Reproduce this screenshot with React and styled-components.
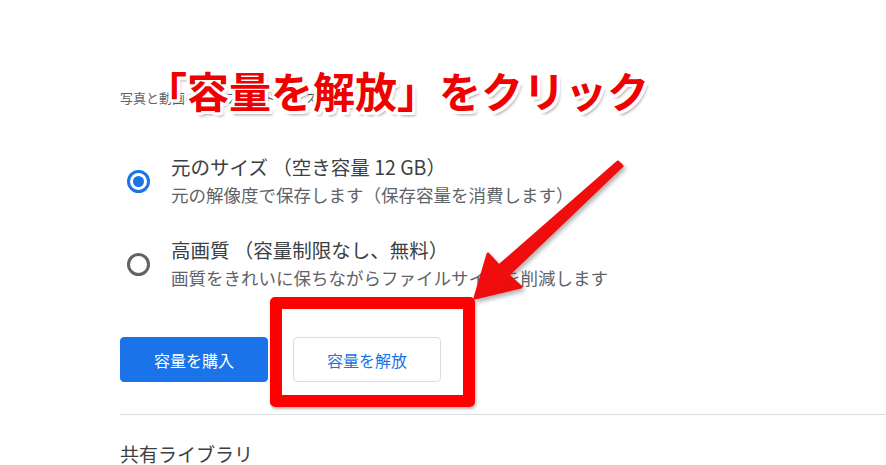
import React from 'react';
import styled, { createGlobalStyle } from 'styled-components';

const GlobalStyle = createGlobalStyle`
    html, body {
        margin: 0;
        padding: 0;
        background: #ffffff;
    }
    body {
        font-family: "Noto Sans CJK JP", "Noto Sans", Roboto, sans-serif;
        color: #3c4043;
    }
`;

const Page = styled.div`
    position: relative;
    width: 886px;
    height: 465px;
    overflow: hidden;
    background: #ffffff;
`;

const Content = styled.div`
    display: flex;
    flex-direction: column;
    padding: 90px 0 0 120px;
`;

const SectionTitle = styled.div`
    font-size: 13px;
    line-height: 16px;
    color: #5f6368;
`;

const OptionList = styled.div`
    display: flex;
    flex-direction: column;
    gap: 29px;
    margin-top: 48px;
`;

const Option = styled.label`
    display: flex;
    align-items: center;
    gap: 21px;
    padding-left: 7px;
`;

const Radio = styled.span`
    box-sizing: border-box;
    width: 23px;
    height: 23px;
    border-radius: 50%;
    border: 3px solid ${p => (p.checked ? '#1a73e8' : '#5f6368')};
    display: flex;
    align-items: center;
    justify-content: center;
    flex-shrink: 0;

    &::after {
        content: '';
        width: 11px;
        height: 11px;
        border-radius: 50%;
        background: ${p => (p.checked ? '#1a73e8' : 'transparent')};
    }
`;

const OptionText = styled.div`
    display: flex;
    flex-direction: column;
    gap: 2px;
`;

const OptionTitle = styled.div`
    font-size: 19.5px;
    line-height: 26px;
    color: #3c4043;
    white-space: pre;
`;

const OptionSub = styled.div`
    font-size: 17.5px;
    line-height: 26px;
    color: #5f6368;
`;

const ButtonRow = styled.div`
    display: flex;
    gap: 25px;
    margin-top: 46px;
`;

const Button = styled.button`
    box-sizing: border-box;
    width: 148px;
    height: 45px;
    border-radius: 4px;
    font-family: inherit;
    font-size: 16px;
    cursor: pointer;
    border: 1px solid ${p => (p.primary ? '#1a73e8' : '#dadce0')};
    background: ${p => (p.primary ? '#1a73e8' : '#ffffff')};
    color: ${p => (p.primary ? '#ffffff' : '#1a73e8')};
`;

const Divider = styled.hr`
    margin: 32px 0 0;
    border: 0;
    border-top: 1px solid #dadce0;
`;

const LibraryTitle = styled.div`
    margin-top: 28px;
    font-size: 19px;
    line-height: 22px;
    color: #3c4043;
`;

/* annotation overlays */
const Caption = styled.div`
    position: absolute;
    left: 145px;
    top: 64px;
    font-size: 42px;
    line-height: 52px;
    font-weight: 700;
    color: #f00000;
    white-space: nowrap;
    text-shadow:
        3px 0 0 #fff, -3px 0 0 #fff, 0 3px 0 #fff, 0 -3px 0 #fff,
        2px 2px 0 #fff, -2px 2px 0 #fff, 2px -2px 0 #fff, -2px -2px 0 #fff,
        3px 2px 0 #fff, -3px 2px 0 #fff, 3px -2px 0 #fff, -3px -2px 0 #fff,
        2px 3px 0 #fff, -2px 3px 0 #fff, 2px -3px 0 #fff, -2px -3px 0 #fff,
        3px 4px 3px rgba(0, 0, 0, 0.35);
`;

const Highlight = styled.div`
    position: absolute;
    left: 270px;
    top: 297px;
    width: 205px;
    height: 110px;
    box-sizing: border-box;
    border: 12px solid #ff0000;
    border-radius: 5px;
    box-shadow: 1px 2px 3px rgba(0, 0, 0, 0.3);
`;

const ArrowLayer = styled.svg`
    position: absolute;
    left: 0;
    top: 0;
    pointer-events: none;
`;

function Arrow() {
    return (
        <ArrowLayer width="886" height="465" viewBox="0 0 886 465">
            <defs>
                <linearGradient id="arrowFill" x1="0" y1="0" x2="1" y2="1">
                    <stop offset="0" stopColor="#ff1a1a" />
                    <stop offset="1" stopColor="#e00000" />
                </linearGradient>
                <filter id="arrowShadow" x="-20%" y="-20%" width="140%" height="140%">
                    <feDropShadow dx="2" dy="3" stdDeviation="2" floodColor="#000" floodOpacity="0.3" />
                </filter>
            </defs>
            <polygon
                points="618,162 622,166 508,275 521,287 475,298 488,254 499,266"
                fill="url(#arrowFill)"
                stroke="url(#arrowFill)"
                strokeWidth="3"
                strokeLinejoin="round"
                filter="url(#arrowShadow)"
            />
        </ArrowLayer>
    );
}

export default function App() {
    return (
        <Page>
            <GlobalStyle />
            <Content>
                <SectionTitle>写真と動画のアップロード サイズ</SectionTitle>
                <OptionList>
                    <Option>
                        <Radio checked />
                        <OptionText>
                            <OptionTitle>元のサイズ （空き容量 12 GB）</OptionTitle>
                            <OptionSub>元の解像度で保存します（保存容量を消費します）</OptionSub>
                        </OptionText>
                    </Option>
                    <Option>
                        <Radio />
                        <OptionText>
                            <OptionTitle>高画質 （容量制限なし、無料）</OptionTitle>
                            <OptionSub>画質をきれいに保ちながらファイルサイズを削減します</OptionSub>
                        </OptionText>
                    </Option>
                </OptionList>
                <ButtonRow>
                    <Button primary>容量を購入</Button>
                    <Button>容量を解放</Button>
                </ButtonRow>
                <Divider />
                <LibraryTitle>共有ライブラリ</LibraryTitle>
            </Content>
            <Highlight />
            <Arrow />
            <Caption>「容量を解放」をクリック</Caption>
        </Page>
    );
}
